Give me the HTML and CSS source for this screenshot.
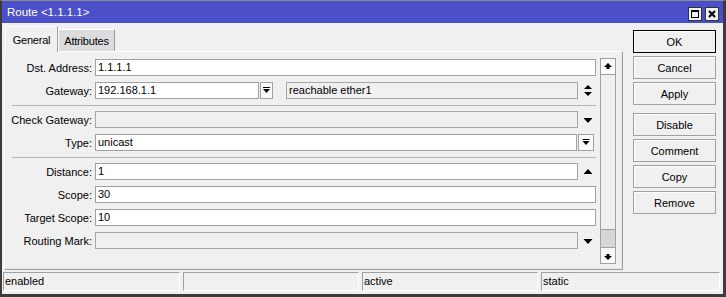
FILE: index.html
```html
<!DOCTYPE html>
<html lang="en">
<head>
    <meta charset="UTF-8">
    <title>Route &lt;1.1.1.1&gt;</title>
    <link rel="stylesheet" href="styles.css">
</head>
<body>
    <div class="window">
        <!-- Title bar -->
        <div class="titlebar">
            <span class="title">Route &lt;1.1.1.1&gt;</span>
            <div class="win-btns">
                <span class="win-btn">
                    <svg width="12" height="12" viewBox="0 0 12 12"><rect x="2.5" y="2.5" width="7" height="7" fill="none" stroke="#000"/><rect x="2" y="2" width="8" height="2" fill="#000"/></svg>
                </span>
                <span class="win-btn">
                    <svg width="12" height="12" viewBox="0 0 12 12"><path d="M3 3 L9 9 M9 3 L3 9" stroke="#000" stroke-width="2"/></svg>
                </span>
            </div>
        </div>

        <div class="content">
            <div class="main">
                <div class="tabs">
                    <div class="tab active">General</div>
                    <div class="tab">Attributes</div>
                </div>

                <div class="panel">
                    <div class="form">
                        <div class="row">
                            <label>Dst. Address:</label>
                            <div class="field">1.1.1.1</div>
                        </div>
                        <div class="row">
                            <label>Gateway:</label>
                            <div class="field gw">192.168.1.1</div>
                            <span class="drop-btn small">
                                <svg width="11" height="15" viewBox="0 0 11 15"><rect x="2" y="4" width="7" height="1" fill="#000"/><polygon points="2,6 9,6 5.5,10" fill="#000"/></svg>
                            </span>
                            <div class="field ro reach">reachable ether1</div>
                            <span class="addon">
                                <svg width="10" height="14" viewBox="0 0 10 14"><polygon points="1,5 9,5 5,1" fill="#000"/><polygon points="1,8 9,8 5,12" fill="#000"/></svg>
                            </span>
                        </div>

                        <div class="sep"></div>

                        <div class="row">
                            <label>Check Gateway:</label>
                            <div class="field ro"></div>
                            <span class="addon">
                                <svg width="10" height="14" viewBox="0 0 10 14"><polygon points="0.5,5 9.5,5 5,10" fill="#000"/></svg>
                            </span>
                        </div>
                        <div class="row">
                            <label>Type:</label>
                            <div class="field">unicast</div>
                            <span class="drop-btn">
                                <svg width="14" height="15" viewBox="0 0 14 15"><rect x="3.5" y="4" width="7" height="1" fill="#000"/><polygon points="3.5,6 10.5,6 7,10" fill="#000"/></svg>
                            </span>
                        </div>

                        <div class="sep"></div>

                        <div class="row">
                            <label>Distance:</label>
                            <div class="field">1</div>
                            <span class="addon">
                                <svg width="10" height="14" viewBox="0 0 10 14"><polygon points="0.5,9 9.5,9 5,4" fill="#000"/></svg>
                            </span>
                        </div>
                        <div class="row">
                            <label>Scope:</label>
                            <div class="field">30</div>
                        </div>
                        <div class="row">
                            <label>Target Scope:</label>
                            <div class="field">10</div>
                        </div>
                        <div class="row">
                            <label>Routing Mark:</label>
                            <div class="field ro"></div>
                            <span class="addon">
                                <svg width="10" height="14" viewBox="0 0 10 14"><polygon points="0.5,5 9.5,5 5,10" fill="#000"/></svg>
                            </span>
                        </div>
                    </div>

                    <!-- Scroll bar -->
                    <div class="scrollbar">
                        <span class="sb-btn">
                            <svg width="14" height="14" viewBox="0 0 14 14"><polygon points="3,7 11,7 7,3" fill="#000"/><rect x="5.5" y="7" width="3" height="2" fill="#000"/></svg>
                        </span>
                        <div class="sb-track"></div>
                        <div class="sb-thumb"></div>
                        <span class="sb-btn">
                            <svg width="14" height="14" viewBox="0 0 14 14"><rect x="5.5" y="5" width="3" height="2" fill="#000"/><polygon points="3,7 11,7 7,11" fill="#000"/></svg>
                        </span>
                    </div>
                </div>
            </div>

            <!-- Dialog buttons -->
            <div class="actions">
                <button class="default">OK</button>
                <button>Cancel</button>
                <button>Apply</button>
                <button class="gap">Disable</button>
                <button>Comment</button>
                <button>Copy</button>
                <button>Remove</button>
            </div>
        </div>

        <!-- Status bar -->
        <div class="statusbar">
            <div class="cell">enabled</div>
            <div class="cell"></div>
            <div class="cell">active</div>
            <div class="cell">static</div>
        </div>
    </div>
</body>
</html>
```

FILE: styles.css
```css
* {
    margin: 0;
    padding: 0;
    box-sizing: border-box;
}

body {
    font-family: 'Liberation Sans', Arial, sans-serif;
    font-size: 11px;
    color: #000;
    background: #f0f0f0;
}

.window {
    width: 726px;
    height: 297px;
    display: flex;
    flex-direction: column;
    background: #f0f0f0;
    border-top: 1px solid #8c8c8c;
    border-left: 2px solid #3c3c3c;
    border-right: 3px solid #3c3c3c;
    border-bottom: 3px solid #3c3c3c;
}

/* Title bar */
.titlebar {
    height: 22px;
    flex: none;
    background: #4b50c9;
    color: #fff;
    display: flex;
    align-items: center;
    justify-content: space-between;
    padding-left: 5px;
    padding-right: 4px;
}

.title {
    font-size: 11.5px;
    margin-top: -1px;
}

.win-btns {
    display: flex;
    gap: 3px;
    align-self: flex-start;
    margin-top: 6px;
}

.win-btn {
    width: 14px;
    height: 14px;
    background: #f0f0f0;
    border: 1px solid #333;
    display: flex;
    align-items: center;
    justify-content: center;
}

/* Main area */
.content {
    display: flex;
    height: 247px;
    flex: none;
}

.main {
    width: 621px;
    padding-left: 2px;
    padding-top: 3px;
    display: flex;
    flex-direction: column;
}

.tabs {
    display: flex;
    align-items: flex-end;
    height: 25px;
    margin-left: 1px;
    position: relative;
    z-index: 1;
}

.tab {
    width: 57px;
    height: 22px;
    display: flex;
    align-items: center;
    justify-content: center;
    letter-spacing: -0.2px;
    background: #dcdcdc;
    border-top: 1px solid #fff;
    border-left: 1px solid #fff;
    border-right: 1px solid #a0a0a0;
}

.tab.active {
    width: 53px;
    height: 26px;
    margin-bottom: -1px;
    background: #f0f0f0;
}

.panel {
    height: 219px;
    display: flex;
    border-top: 1px solid #fff;
    border-left: 1px solid #fff;
    border-right: 1px solid #a0a0a0;
    border-bottom: 1px solid #a0a0a0;
    box-shadow: inset -1px -1px 0 #e3e3e3;
}

.form {
    width: 591px;
    padding-top: 7px;
}

.row {
    display: flex;
    align-items: center;
    height: 17px;
    margin-bottom: 6px;
}

.row label {
    width: 87px;
    text-align: right;
    margin-right: 3px;
    flex: none;
}

.field {
    height: 17px;
    flex: 1;
    background: #fff;
    border: 1px solid #a0a0a0;
    padding-left: 2px;
    line-height: 15px;
    white-space: nowrap;
    overflow: hidden;
}

.field.ro {
    background: #f0f0f0;
    border-color: #a8a8a8;
}

.field.gw {
    flex: none;
    width: 164px;
}

.field.reach {
    margin-left: 13px;
}

.addon {
    width: 18px;
    flex: none;
    display: flex;
    align-items: center;
    padding-left: 5px;
}

.drop-btn {
    width: 16px;
    height: 17px;
    flex: none;
    margin-left: 1px;
    margin-right: 2px;
    background: #fafafa;
    border: 1px solid #a0a0a0;
    display: flex;
    align-items: center;
    justify-content: center;
}

.drop-btn.small {
    width: 13px;
    margin-right: 0;
}

.sep {
    height: 1px;
    background: #b4b4b4;
    margin: 2px 0 5px 7px;
}

/* Scroll bar */
.scrollbar {
    width: 16px;
    height: 206px;
    margin-top: 6px;
    margin-left: 4px;
    display: flex;
    flex-direction: column;
    background: #f0f0f0;
    border: 1px solid #a0a0a0;
}

.sb-btn {
    height: 15px;
    flex: none;
    background: #fafafa;
    display: flex;
    align-items: center;
    justify-content: center;
}

.sb-track {
    flex: 1;
    border-top: 1px solid #a0a0a0;
}

.sb-thumb {
    height: 19px;
    background: #d6d6d6;
    border-top: 1px solid #a0a0a0;
    border-bottom: 1px solid #a0a0a0;
}

/* Dialog buttons */
.actions {
    margin-left: 10px;
    padding-top: 7px;
    display: flex;
    flex-direction: column;
    gap: 3px;
}

button {
    width: 83px;
    height: 23px;
    font-family: inherit;
    font-size: 11px;
    color: #000;
    background: #f0f0f0;
    border: 1px solid #a0a0a0;
    box-shadow: inset 1px 1px 0 #fff;
}

button.default {
    border-color: #000;
}

button.gap {
    margin-top: 5px;
}

/* Status bar */
.statusbar {
    display: grid;
    grid-template-columns: 177px 176px 176px 1fr;
    gap: 3px;
    height: 19px;
    margin-top: 2px;
    padding-left: 1px;
    padding-right: 3px;
}

.cell {
    border-top: 1px solid #a0a0a0;
    border-left: 1px solid #a0a0a0;
    border-bottom: 1px solid #fff;
    border-right: 1px solid #fff;
    padding-left: 1px;
    line-height: 16px;
}
```
